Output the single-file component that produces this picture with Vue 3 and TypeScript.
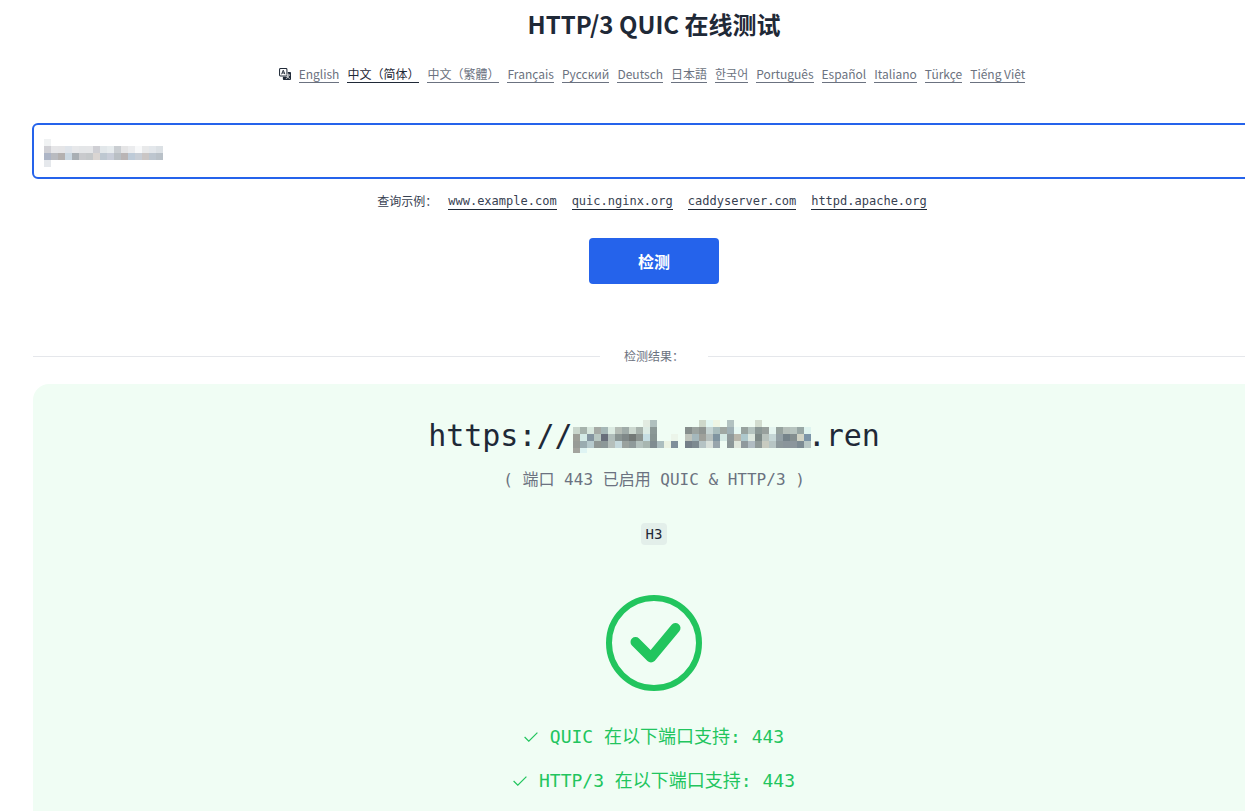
<script setup lang="ts">
import { ref } from 'vue'

interface Language {
  label: string
  code: string
}

const languages: Language[] = [
  { label: 'English', code: 'en' },
  { label: '中文（简体）', code: 'zh-CN' },
  { label: '中文（繁體）', code: 'zh-TW' },
  { label: 'Français', code: 'fr' },
  { label: 'Русский', code: 'ru' },
  { label: 'Deutsch', code: 'de' },
  { label: '日本語', code: 'ja' },
  { label: '한국어', code: 'ko' },
  { label: 'Português', code: 'pt' },
  { label: 'Español', code: 'es' },
  { label: 'Italiano', code: 'it' },
  { label: 'Türkçe', code: 'tr' },
  { label: 'Tiếng Việt', code: 'vi' },
]
const current = 'zh-CN'
const examples: string[] = ['www.example.com', 'quic.nginx.org', 'caddyserver.com', 'httpd.apache.org']
const results: string[] = ['QUIC 在以下端口支持: 443', 'HTTP/3 在以下端口支持: 443']
const domain = ref('')

interface Cell {
  x: number
  y: number
  fill: string
}

// Each row lists hex colours separated by spaces; "-" leaves a cell empty.
function mosaic(rows: string[]): Cell[] {
  return rows.flatMap((row, y) =>
    row.split(' ').flatMap((c, x) => (c === '-' ? [] : [{ x: x * 7, y: y * 7, fill: '#' + c }])),
  )
}

const inputCells = mosaic([
  'f0f2f3',
  'd0d0d5 e6e6e8 e5e5e7 dfe4ea e7e8ea e4e6e8 e5e6e8 cfcfd4 e2e7ea e7ecee caced2 e5e5e6 ebecee f8f9fa e8e9ea e3e7eb dce1e5',
  'adb5c6 b9bbc0 b4b1b0 cbd8e2 a9afb4 c9cacd c5c8ca dad5d2 bec8d1 c8cdd8 b9bfc4 bab5b5 becbd8 c8ced6 cac6c5 bdc6cf b9c1c8',
  'e5e8ec',
])

const hostCells = mosaic([
  '- - - - - - - - - - e2ebe1 b0c0be - - - - - - ced8ca e3f7f2 eef5e4 - b2c2c1 - - - d2dccf',
  'c9d6cc a6b3ac d8e8de a5aaa5 a6b8b7 dcebe2 b4bcb5 a0aca9 ccd8cf a8b3ad dcebe4 8b9896 - - - - 868e8c 9ca4a0 8f9592 c5d4d3 a8bcbc a0a8a3 9fb0b5 e6f8f3 98a39f b5c4c0 8b9896 98a09d e5f5f0 97a39f b5bfba b7c4bf 98a7a5 dff4ef',
  '9c9e97 d4ebe6 8495a0 b8c8c2 686e7a b0bdba 8a9593 7f8888 737976 8c9490 c5dde2 879492 - - ecf5ea - bfc4bc a5b8bc 9ea09a b5bfbd 7f94a0 d5e9e4 909a9b b9b7ac aec8cc dde8df 7d8987 b8c2bd c5d6d6 93a0a5 75838a 848f90 d0d3c5 7c95a8',
  '979b96 9aacb0 b6cacd 8f9794 8c9898 b5bfbb c4d8dc 9aa29e 8f9a9a b4c2be a8b6b0 7f8c90 acbebf ebf2e2 7f8f9a - 747f88 7d8a90 b5c3c4 d8e0da 98a5ac - 8c9798 e0e7dc 8f999d b0bcc2 8f9a98 c8cbc0 b7c5c4 8c989b 8a959b 8c969c 7d8b93 b9c8c6',
  'a3a49e dff4f3',
])
</script>

<template>
  <div class="viewport">
    <main class="page">
      <h1>HTTP/3 QUIC 在线测试</h1>

      <nav class="languages" aria-label="Language">
        <svg class="translate" viewBox="0 0 13 13" aria-hidden="true">
          <rect x="0.6" y="0.6" width="8" height="8" rx="1" fill="#fff" stroke="#1f2937" stroke-width="1.1" />
          <path d="M2.8 6.8 4.6 2.4 6.4 6.8M3.4 5.4h2.4" fill="none" stroke="#1f2937" stroke-width="1" />
          <path d="M9.6 4.2H12a1 1 0 0 1 1 1V12a1 1 0 0 1-1 1H5.2a1 1 0 0 1-1-1V9.6h4.4a1 1 0 0 0 1-1z" fill="#1f2937" />
          <path d="M9.9 6v1M8 7.5h4M11 7.7c-.5 1.8-1.5 3-3.6 3.8M8.9 9c.6 1.1 1.5 2 2.8 2.5" fill="none" stroke="#fff" stroke-width="0.8" />
        </svg>
        <a v-for="l in languages" :key="l.code" href="#" :lang="l.code" :class="{ active: l.code === current }">{{ l.label }}</a>
      </nav>

      <form @submit.prevent>
        <div class="field">
          <input v-model="domain" type="text" aria-label="域名" />
          <svg class="field-mask" viewBox="0 0 119 28" shape-rendering="crispEdges" aria-hidden="true">
            <rect v-for="(c, i) in inputCells" :key="i" :x="c.x" :y="c.y" width="7" height="7" :fill="c.fill" />
          </svg>
        </div>
        <p class="examples">
          <span class="examples-label">查询示例：</span>
          <a v-for="e in examples" :key="e" href="#" @click.prevent="domain = e">{{ e }}</a>
        </p>
        <button type="submit">检测</button>
      </form>

      <div class="divider"><span>检测结果：</span></div>

      <section class="card">
        <h2>
          <span>https://</span>
          <svg class="host-mask" viewBox="0 0 238 33" shape-rendering="crispEdges" aria-hidden="true">
            <rect v-for="(c, i) in hostCells" :key="i" :x="c.x" :y="c.y" width="7" height="7" :fill="c.fill" />
          </svg>
          <span>.ren</span>
        </h2>
        <p class="summary">( 端口 443 已启用 QUIC &amp; HTTP/3 )</p>
        <span class="badge">H3</span>
        <svg class="success" viewBox="0 0 96 96" aria-hidden="true">
          <circle cx="48" cy="48" r="45" fill="none" stroke="#22c55e" stroke-width="6" />
          <path d="M29.5 47 45 62.5 69.500 33" fill="none" stroke="#22c55e" stroke-width="10" stroke-linecap="round" stroke-linejoin="round" />
        </svg>
        <ul>
          <li v-for="r in results" :key="r">
            <svg class="tick" viewBox="0 0 14 10" aria-hidden="true">
              <path d="M.6 5 4.800 9.200 13.400.6" fill="none" stroke="#22c55e" stroke-width="1.200" />
            </svg>
            <span>{{ r }}</span>
          </li>
        </ul>
      </section>
    </main>
  </div>
</template>

<style>
body {
  margin: 0;
  background: #fff;
}
</style>

<style scoped>
* {
  box-sizing: border-box;
}
.viewport {
  display: flex;
  min-height: 100vh;
  overflow: hidden;
  color: #1f2937;
  font-family: "Noto Sans CJK SC", "Noto Sans", sans-serif;
}
.page {
  display: flex;
  flex: 1;
  flex-direction: column;
  min-width: 0;
  margin: 0 -31px 0 32px;
  padding-top: 8px;
}
h1,
h2,
p,
ul {
  margin: 0;
  padding: 0;
}
h1 {
  font-size: 24px;
  line-height: 32px;
  font-weight: 700;
  text-align: center;
}
.languages {
  display: flex;
  justify-content: center;
  align-items: center;
  gap: 8px;
  margin-top: 25px;
  padding-right: 4px;
  font-size: 12px;
  line-height: 17px;
  white-space: nowrap;
}
.languages a {
  color: #6b7280;
  text-decoration: none;
  border-bottom: 1px solid #6b7280;
}
.languages a.active {
  color: #1f2937;
  border-color: #1f2937;
}
.translate {
  width: 12px;
  height: 12px;
}
form {
  display: flex;
  flex-direction: column;
  align-items: center;
  margin-top: 40px;
}
.field {
  position: relative;
  width: 100%;
}
input {
  display: block;
  width: 100%;
  height: 56px;
  padding: 0 10px;
  border: 2px solid #2563eb;
  border-radius: 6px;
  outline: none;
  background: #fff;
  color: #1f2937;
  font-family: inherit;
  font-size: 16px;
}
.field-mask {
  position: absolute;
  left: 12px;
  top: 16px;
  width: 119px;
  height: 28px;
}
.examples {
  display: flex;
  align-items: flex-end;
  gap: 15px;
  margin-top: 13px;
  padding-right: 4px;
  font-size: 12px;
  line-height: 18px;
  color: #374151;
}
.examples-label {
  margin-right: -4px;
}
.examples a {
  color: #374151;
  font-family: "DejaVu Sans Mono", monospace;
  line-height: 16px;
  text-decoration: none;
  border-bottom: 1px solid #1f2937;
}
button {
  width: 130px;
  height: 46px;
  margin-top: 28px;
  padding: 0;
  border: 0;
  border-radius: 4px;
  background: #2563eb;
  color: #fff;
  font-family: inherit;
  font-size: 16px;
  font-weight: 700;
}
.divider {
  display: flex;
  align-items: center;
  gap: 24px;
  margin: 64px 1px 0;
  color: #6b7280;
  font-size: 12px;
  line-height: 16px;
}
.divider::before,
.divider::after {
  content: "";
  flex: 1;
  height: 1px;
  background: #e5e7eb;
}
.card {
  display: flex;
  flex: 1;
  flex-direction: column;
  align-items: center;
  margin: 20px 1px 0;
  padding: 32px 0 12px;
  border-radius: 16px 16px 0 0;
  background: #f0fdf4;
  font-family: "DejaVu Sans Mono", "Noto Sans CJK SC", monospace;
}
h2 {
  display: flex;
  align-items: center;
  font-size: 30px;
  line-height: 40px;
  font-weight: 400;
}
.host-mask {
  width: 238px;
  height: 33px;
  margin-right: -3px;
}
.summary {
  margin-top: 12px;
  color: #6b7280;
  font-size: 16px;
  line-height: 24px;
}
.badge {
  margin-top: 31px;
  padding: 0 5px;
  border-radius: 4px;
  background: #e3efea;
  font-size: 14px;
  line-height: 22px;
}
.success {
  width: 96px;
  height: 96px;
  margin-top: 50px;
}
ul {
  display: flex;
  flex-direction: column;
  align-items: center;
  gap: 16px;
  margin-top: 32px;
  list-style: none;
}
li {
  display: flex;
  align-items: center;
  gap: 12px;
  color: #22c55e;
  font-size: 18px;
  line-height: 28px;
}
.tick {
  width: 14px;
  height: 10px;
}
</style>
